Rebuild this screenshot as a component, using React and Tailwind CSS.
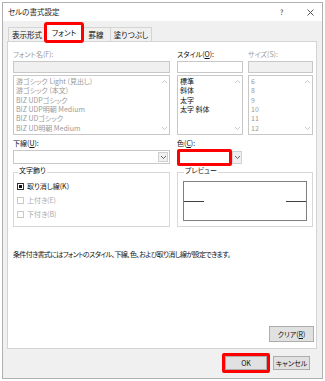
import React from 'react';

const FONT = "font-['Noto_Sans_CJK_JP','Noto_Sans',sans-serif] [font-feature-settings:'palt']";

const Up = ({ className = '' }) => (
  <svg width="7" height="5" viewBox="0 0 7 5" className={className}>
    <path d="M1 4 L3.5 1.5 L6 4" fill="none" stroke="currentColor" strokeWidth="0.9" />
  </svg>
);

const Down = ({ className = '' }) => (
  <svg width="7" height="5" viewBox="0 0 7 5" className={className}>
    <path d="M1 1 L3.5 3.5 L6 1" fill="none" stroke="currentColor" strokeWidth="0.9" />
  </svg>
);

const ListBox = ({ items, disabled }) => (
  <div className="h-[60px] mt-[2px] border border-[#c8c8c8] bg-white flex">
    <div className={`flex-1 pt-[1px] pl-[2px] ${disabled ? 'text-[#9a9a9a]' : 'text-[#111]'}`}>
      {items.map((it) => (
        <div key={it} className="h-[9.33px] flex items-center whitespace-nowrap">{it}</div>
      ))}
    </div>
    <div className="w-[9px] flex flex-col justify-between items-center py-[3px] text-[#c4c4c4]">
      <Up />
      <Down />
    </div>
  </div>
);

const Input = ({ disabled }) => (
  <div className={`h-[12px] border border-[#c8c8c8] ${disabled ? 'bg-[#f0f0f0]' : 'bg-white'}`} />
);

const Check = ({ label, checked }) => (
  <div className={`h-[14px] flex items-center gap-[3px] ${checked ? 'text-[#111]' : 'text-[#a8a8a8]'}`}>
    <div className={`w-[7px] h-[7px] border flex items-center justify-center ${checked ? 'border-[#333]' : 'border-[#c8c8c8]'}`}>
      {checked && <div className="w-[3px] h-[3px] bg-[#111]" />}
    </div>
    <span>{label}</span>
  </div>
);

export default function App() {
  return (
    <div className={`w-[325px] h-[381px] bg-white p-[2px] text-[7px] leading-none ${FONT}`}>
      <div className="h-[377px] border border-[#b0b0b0] flex flex-col">
        {/* title bar */}
        <div className="h-[18px] bg-white flex items-center pl-[5px] text-[#222] text-[7.5px]">
          <span className="flex-1">セルの書式設定</span>
          <span className="w-[10px] text-[7px] text-[#333]">?</span>
          <div className="ml-[17px] mr-[8px] text-[#444]">
            <svg width="7" height="7" viewBox="0 0 7 7">
              <path d="M0.5 0.5 L6.5 6.5 M6.5 0.5 L0.5 6.5" stroke="currentColor" strokeWidth="0.9" />
            </svg>
          </div>
        </div>

        <div className="flex-1 bg-[#f0f0f0] pl-[4px] flex flex-col">
          {/* tabs */}
          <div className="h-[20px] flex items-end pl-[1px] text-[7.5px] text-[#111]">
            <div className="w-[38px] h-[14px] border border-b-0 border-[#d4d4d4] flex items-center justify-center">表示形式</div>
            <div className="relative w-[36px] h-[17px] bg-white border border-b-0 border-[#d4d4d4] flex items-center justify-center outline-[3px] outline-[#ff0000] outline-offset-[-1px] rounded-[1px] z-10">
              フォント
            </div>
            <div className="w-[29px] h-[14px] border border-b-0 border-l-0 border-[#d4d4d4] flex items-center justify-center">罫線</div>
            <div className="w-[41px] h-[14px] border border-b-0 border-l-0 border-[#d4d4d4] flex items-center justify-center">塗りつぶし</div>
          </div>

          {/* panel */}
          <div className="w-[310px] h-[308px] bg-white border border-[#d4d4d4] pl-[5px] flex flex-col">
            <div className="flex">
              <div className="w-[157px]">
                <div className="h-[10px] mt-[7px] mb-[2px] flex items-center text-[#9a9a9a]">フォント名(F):</div>
                <Input disabled />
                <ListBox
                  disabled
                  items={[
                    '游ゴシック Light (見出し)',
                    '游ゴシック (本文)',
                    'BIZ UDPゴシック',
                    'BIZ UDP明朝 Medium',
                    'BIZ UDゴシック',
                    'BIZ UD明朝 Medium',
                  ]}
                />
                <div className="h-[10px] mt-[3px] flex items-center text-[#111]">
                  下線(<span className="underline">U</span>):
                </div>
                <div className="h-[14px] mt-[2px] border border-[#c8c8c8] bg-white flex justify-end">
                  <div className="w-[10px] my-[1px] mr-[1px] border border-[#d0d0d0] bg-[#f0f0f0] flex items-center justify-center text-[#555]">
                    <Down />
                  </div>
                </div>
              </div>

              <div className="w-[66px] ml-[7px]">
                <div className="h-[10px] mt-[7px] mb-[2px] flex items-center text-[#111]">
                  スタイル(<span className="underline">O</span>):
                </div>
                <Input />
                <ListBox items={['標準', '斜体', '太字', '太字 斜体']} />
                <div className="h-[10px] mt-[3px] flex items-center text-[#111]">
                  色(<span className="underline">C</span>):
                </div>
                <div className="h-[14px] mt-[2px] flex items-center">
                  <div className="w-[55px] h-[17px] border-[3px] border-[#ff0000] rounded-[2px] bg-white" />
                  <div className="w-[10px] h-[13px] border border-[#d0d0d0] bg-[#f0f0f0] flex items-center justify-center text-[#555]">
                    <Down />
                  </div>
                </div>
              </div>

              <div className="w-[65px] ml-[5px]">
                <div className="h-[10px] mt-[7px] mb-[2px] flex items-center text-[#9a9a9a]">サイズ(S):</div>
                <Input disabled />
                <ListBox disabled items={['6', '8', '9', '10', '11', '12']} />
              </div>
            </div>

            {/* group boxes */}
            <div className="flex mt-[3px]">
              <fieldset className="w-[157px] h-[60px] border border-[#d8d8d8] pl-[3px]">
                <legend className="px-[1px] ml-[1px] h-[10px] text-[#111]">文字飾り</legend>
                <div className="mt-[2px]">
                  <Check checked label="取り消し線(K)" />
                  <Check label="上付き(E)" />
                  <Check label="下付き(B)" />
                </div>
              </fieldset>
              <fieldset className="w-[136px] h-[60px] ml-[7px] border border-[#d8d8d8] px-[5px]">
                <legend className="px-[1px] ml-[1px] h-[10px] text-[#111]">プレビュー</legend>
                <div className="h-[40px] mt-[4px] border border-[#808080] flex items-center justify-between">
                  <div className="w-[20px] h-px bg-[#404040]" />
                  <div className="w-[20px] h-px bg-[#404040]" />
                </div>
              </fieldset>
            </div>

            <div className="h-[10px] mt-[22px] flex items-center text-[#111] tracking-[-0.65px]">
              条件付き書式にはフォントのスタイル、下線、色、および取り消し線が設定できます。
            </div>

            <div className="mt-[67px] pr-[2px] flex justify-end">
              <div className="w-[45px] h-[16px] border border-[#adadad] bg-[#e1e1e1] flex items-center justify-center text-[#111]">
                クリア(<span className="underline">R</span>)
              </div>
            </div>
          </div>

          {/* buttons */}
          <div className="flex justify-end items-center gap-[3px] mt-[4px] pr-[12px]">
            <div className="border-[3px] border-[#ff0000] rounded-[2px]">
              <div className="w-[42px] h-[14px] border border-[#adadad] bg-[#e1e1e1] flex items-center justify-center text-[#111]">OK</div>
            </div>
            <div className="w-[37px] h-[14px] border border-[#adadad] bg-[#e1e1e1] flex items-center justify-center text-[#111]">キャンセル</div>
          </div>
        </div>
      </div>
    </div>
  );
}
